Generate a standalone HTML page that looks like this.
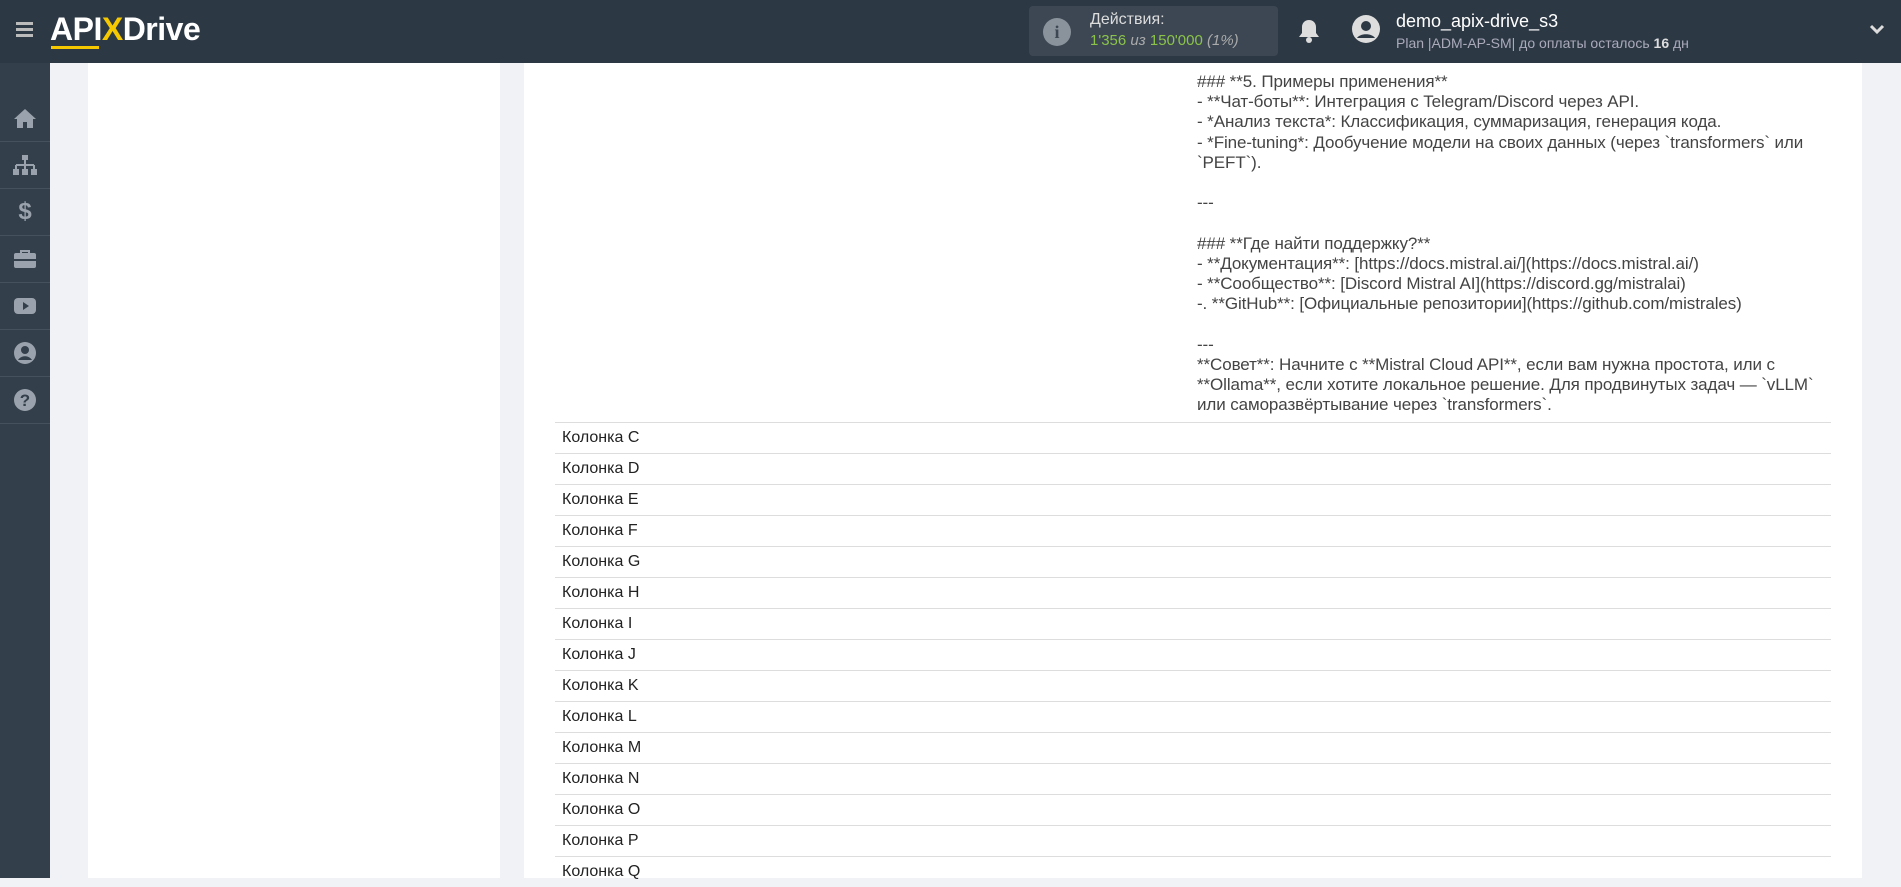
<!DOCTYPE html>
<html><head><meta charset="utf-8"><style>
*{margin:0;padding:0;box-sizing:border-box}
body{width:1901px;height:878px;overflow:hidden;background:#f0f2f6;font-family:"Liberation Sans",sans-serif;position:relative}
.hdr{position:absolute;left:0;top:0;width:1901px;height:63px;background:#2d3845}
.side{position:absolute;left:0;top:63px;width:50px;height:815px;background:#343f4c}
.side .it{position:absolute;left:0;width:50px;height:47px;border-bottom:1px solid #46515e;display:flex;align-items:center;justify-content:center}
.panel{position:absolute;background:#fff}
.txt{position:absolute;left:1197px;top:72px;font-size:17px;line-height:20.2px;color:#444;white-space:pre;letter-spacing:-0.1px}
.rows{position:absolute;left:555px;top:422px;width:1276px}
.row{height:31px;border-top:1px solid #ddd;font-size:16px;color:#222;padding-left:7px;line-height:30px}
</style></head><body>
<div class="hdr">
 <div style="position:absolute;left:16px;top:22px;width:17px;height:3px;background:#bbb;box-shadow:0 6px 0 #bbb,0 12px 0 #bbb"></div>
 <div style="position:absolute;left:50px;top:11px;font-size:32px;font-weight:bold;color:#fff;letter-spacing:-0.5px">API<span style="color:#f5c800">X</span>Drive</div>
 <div style="position:absolute;left:51px;top:46px;width:48px;height:3px;background:#f5c800"></div>
 <div style="position:absolute;left:1029px;top:6px;width:249px;height:50px;background:#3c4753;border-radius:4px">
  <div style="position:absolute;left:14px;top:12px;width:28px;height:28px;border-radius:50%;background:#8a939c;color:#3c4753;font-weight:bold;text-align:center;line-height:28px;font-size:18px;font-family:'Liberation Serif',serif">i</div>
  <div style="position:absolute;left:61px;top:5px;color:#ddd;font-size:16px">Действия:</div>
  <div style="position:absolute;left:61px;top:26px;color:#8bc34a;font-size:15px">1'356 <i style="color:#aaa">из</i> 150'000 <i style="color:#aaa">(1%)</i></div>
 </div>
 <svg style="position:absolute;left:1298px;top:18px" width="22" height="26" viewBox="0 0 22 26"><path d="M11 2c-4 0-7 3-7 7v6l-3 4h20l-3-4V9c0-4-3-7-7-7z" fill="#ddd"/><circle cx="11" cy="22" r="3" fill="#ddd"/></svg>
 <svg style="position:absolute;left:1351px;top:14px" width="30" height="30" viewBox="0 0 30 30"><circle cx="15" cy="15" r="14" fill="#ddd"/><circle cx="15" cy="12" r="5" fill="#2d3845"/><path d="M6 24c3-5 15-5 18 0" fill="#2d3845"/></svg>
 <div style="position:absolute;left:1396px;top:11px;color:#fff;font-size:18px">demo_apix-drive_s3</div>
 <div style="position:absolute;left:1396px;top:35px;color:#aab;font-size:14px">Plan |ADM-AP-SM| до оплаты осталось <b style="color:#ddd">16</b> дн</div>
 <svg style="position:absolute;left:1869px;top:24px" width="16" height="12" viewBox="0 0 16 12"><path d="M2 2l6 6 6-6" stroke="#ddd" stroke-width="3" fill="none"/></svg>
</div>
<div class="side">
 <div class="it" style="top:32px"><svg width="24" height="22" viewBox="0 0 24 22"><path d="M12 2L1 12h3v9h6v-6h4v6h6v-9h3z" fill="#9aa3ad"/></svg></div>
 <div class="it" style="top:79px"><svg width="26" height="22" viewBox="0 0 26 22"><rect x="10" y="1" width="6" height="5" fill="#9aa3ad"/><path d="M13 6v5M4 11h18M4 11v4M13 11v4M22 11v4" stroke="#9aa3ad" stroke-width="2"/><rect x="1" y="15" width="6" height="6" fill="#9aa3ad"/><rect x="10" y="15" width="6" height="6" fill="#9aa3ad"/><rect x="19" y="15" width="6" height="6" fill="#9aa3ad"/></svg></div>
 <div class="it" style="top:126px;color:#9aa3ad;font-weight:bold;font-size:24px">$</div>
 <div class="it" style="top:173px"><svg width="24" height="20" viewBox="0 0 24 20"><path d="M8 4V2h8v2" stroke="#9aa3ad" stroke-width="2" fill="none"/><rect x="1" y="4" width="22" height="15" rx="2" fill="#9aa3ad"/><rect x="1" y="10" width="22" height="2" fill="#343f4c"/></svg></div>
 <div class="it" style="top:220px"><svg width="24" height="20" viewBox="0 0 24 20"><rect x="1" y="2" width="22" height="16" rx="4" fill="#9aa3ad"/><path d="M10 6v8l6-4z" fill="#343f4c"/></svg></div>
 <div class="it" style="top:267px"><svg width="24" height="24" viewBox="0 0 24 24"><circle cx="12" cy="12" r="11" fill="#9aa3ad"/><circle cx="12" cy="9" r="4" fill="#343f4c"/><path d="M5 19c3-5 11-5 14 0" fill="#343f4c"/></svg></div>
 <div class="it" style="top:314px"><svg width="24" height="24" viewBox="0 0 24 24"><circle cx="12" cy="12" r="11" fill="#9aa3ad"/><text x="12" y="18" text-anchor="middle" font-size="17" font-weight="bold" fill="#343f4c" font-family="Liberation Sans">?</text></svg></div>
</div>
<div class="panel" style="left:88px;top:63px;width:412px;height:815px"></div>
<div class="panel" style="left:524px;top:63px;width:1338px;height:815px"></div>
<div class="txt">### **5. Примеры применения**
- **Чат-боты**: Интеграция с Telegram/Discord через API.
- *Анализ текста*: Классификация, суммаризация, генерация кода.
- *Fine-tuning*: Дообучение модели на своих данных (через `transformers` или
`PEFT`).

---

### **Где найти поддержку?**
- **Документация**: [https://docs.mistral.ai/](https://docs.mistral.ai/)
- **Сообщество**: [Discord Mistral AI](https://discord.gg/mistralai)
-. **GitHub**: [Официальные репозитории](https://github.com/mistrales)

---
**Совет**: Начните с **Mistral Cloud API**, если вам нужна простота, или с
**Ollama**, если хотите локальное решение. Для продвинутых задач — `vLLM`
или саморазвёртывание через `transformers`.</div>
<div class="rows">
<div class="row">Колонка C</div><div class="row">Колонка D</div><div class="row">Колонка E</div><div class="row">Колонка F</div><div class="row">Колонка G</div><div class="row">Колонка H</div><div class="row">Колонка I</div><div class="row">Колонка J</div><div class="row">Колонка K</div><div class="row">Колонка L</div><div class="row">Колонка M</div><div class="row">Колонка N</div><div class="row">Колонка O</div><div class="row">Колонка P</div><div class="row">Колонка Q</div>
</div>
</body></html>
